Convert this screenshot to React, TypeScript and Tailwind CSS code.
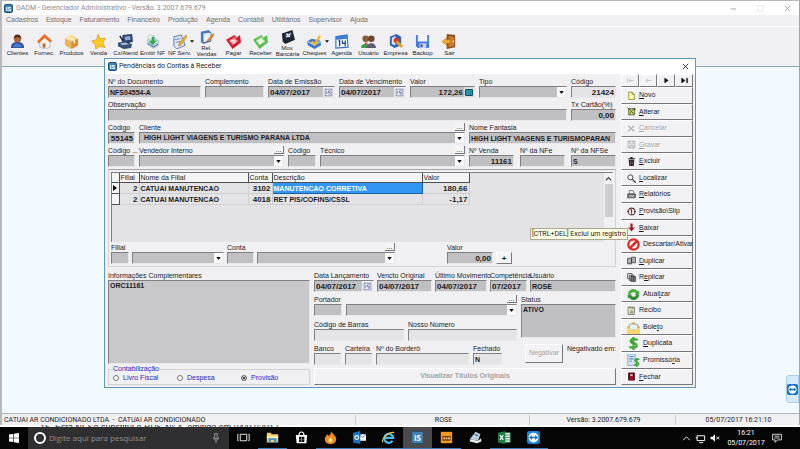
import { useId } from "react";
import type { ReactNode } from "react";

const SUNK = "border border-t-[#808084] border-l-[#808084] border-r-[#e8e8ea] border-b-[#e8e8ea]";
const RAISED = "border border-t-white border-l-white border-r-[#77777b] border-b-[#77777b]";

function Svg({ children, className = "size-4" }: { children: ReactNode; className?: string }) {
  return (
    <svg viewBox="0 0 16 16" className={`${className} shrink-0`} aria-hidden="true">
      {children}
    </svg>
  );
}

function AppLogo({ className }: { className: string }) {
  return (
    <span className={`${className} flex shrink-0 items-center justify-center rounded-[2px] border border-[#1d4f74] bg-[#3d83b3] font-bold text-white`}>
      IS
    </span>
  );
}

/* ---------- form pieces ---------- */

const isNumeric = (text: string) => /^[\d.,/-]+$/.test(text);

type FieldProps = {
  label: string;
  value?: string;
  className?: string;
  tone?: string;
  align?: string;
  adorn?: ReactNode;
};

function Field({ label, value = "", className = "", tone = "bg-[#c0c0c2]", align = "", adorn }: FieldProps) {
  const id = useId();
  return (
    <div className={`flex min-w-0 flex-col ${className}`}>
      <label htmlFor={id} className="h-[9px] leading-[9px] whitespace-nowrap">{label}</label>
      <div className={`flex h-3 items-center ${SUNK} ${tone}`}>
        <input
          id={id}
          defaultValue={value}
          className={`h-full w-full min-w-0 bg-transparent px-px font-bold outline-none ${align} ${isNumeric(value) ? "text-[8px]" : ""}`}
        />
        {adorn}
      </div>
    </div>
  );
}

type ComboProps = { label: string; value?: string; className?: string; hideLabel?: boolean; more?: boolean };

function Combo({ label, value = "", className = "", hideLabel, more }: ComboProps) {
  const id = useId();
  return (
    <div className={`flex min-w-0 flex-col ${className}`}>
      <div className="flex h-[9px] items-start leading-[9px] whitespace-nowrap">
        {!hideLabel && <label htmlFor={id}>{label}</label>}
        <div className="flex-1" />
        {more && <MoreButton />}
      </div>
      <div className={`relative h-3 ${SUNK} bg-[#c0c0c2]`}>
        <select
          id={id}
          aria-label={hideLabel ? label : undefined}
          className="block h-full w-full appearance-none bg-transparent px-1 font-bold leading-[10px] outline-none"
        >
          <option>{value}</option>
        </select>
        <span className="pointer-events-none absolute inset-y-0 right-0 flex w-[9px] items-center justify-center bg-[#fafafa]">
          <svg viewBox="0 0 6 4" className="h-[3px] w-[5px]"><path d="M0 0h6L3 4z" fill="#111" /></svg>
        </span>
      </div>
    </div>
  );
}

function MoreButton() {
  return (
    <button type="button" aria-label="Mais opções" className="flex h-2 w-[10px] items-end justify-center border-r border-b border-[#77777b] bg-[#f4f4f6] leading-[6px]">
      ...
    </button>
  );
}

function CalendarButton() {
  return (
    <button type="button" aria-label="Abrir calendário" className="flex h-full w-[11px] shrink-0 items-center justify-center bg-[#f0f0f4]">
      <Svg className="size-[9px]">
        <rect x="2" y="2" width="12" height="12" fill="#fff" stroke="#6a6ea8" strokeWidth="1.400" />
        <path d="M5 5v6M12 5H8v3h3v3H8" fill="none" stroke="#4a4e8c" strokeWidth="1.300" />
      </Svg>
    </button>
  );
}

function CalcButton() {
  return (
    <button type="button" aria-label="Calculadora" className="flex h-full w-[10px] shrink-0 items-center justify-center bg-[#d8dcde]">
      <span className="h-[7px] w-2 rounded-[1px] border border-[#0b4f5e] bg-[#2a8fa0]" />
    </button>
  );
}

/* ---------- main toolbar ---------- */

const check = <path d="M5 8l3 3 6-9" fill="none" stroke="#f2b824" strokeWidth="2.600" />;

const tools: { name: string; icon: ReactNode; arrow?: boolean; twoLines?: boolean }[] = [
  { name: "Clientes", icon: <><path d="M1 15c0-5 3-6.500 7-6.500s7 1.500 7 6.500z" fill="#284f9c" /><path d="M3 14c1-3 2-4 5-4s4 1 5 4z" fill="#4a79cc" /><circle cx="8" cy="5" r="4" fill="#a8683a" /><path d="M4 5c0-6 8-6 8 0-2-2-6-2-8 0z" fill="#4b2814" /></> },
  { name: "Fornec.", icon: <><path d="M3 8v6l6 2 5-2V8L9 3z" fill="#f4f2f0" stroke="#9a9a9a" strokeWidth=".6" /><path d="M0 8l8-8 8 7-2 2-6-5-6 6z" fill="#ee6a1f" /><path d="M6 10h3v5l-3-1z" fill="#b06a3a" /></> },
  { name: "Produtos", icon: <><path d="M1 5l7-4 7 4v7l-7 4-7-4z" fill="#e9b255" /><path d="M1 5l7-4 7 4-7 3z" fill="#f8dc98" /><path d="M8 8v8l7-4V5z" fill="#d0903a" /><path d="M4 3l7 4v3" stroke="#fff1c4" strokeWidth="1.600" fill="none" /></> },
  { name: "Venda", icon: <path d="M7.500.5l2.500 4.500 5.500-.5-3 5 2.500 5-5.500-1.500L5 16.500 4.500 11 .5 7.500 6 6z" fill="#fccb1e" stroke="#d9981a" strokeWidth=".8" /> },
  { name: "Cx/Atend", icon: <><path d="M5 1l10-1 1 8-5 2-7-2z" fill="#2c3f66" /><path d="M7 3l6-1 .5 4-6 1z" fill="#89a9dd" /><path d="M0 9l8-1 7 3-1 4-8 1-6-3z" fill="#3c5075" /><path d="M2 10l6-1 4 2-7 1z" fill="#a9b9d2" /><path d="M2 2l3 5" stroke="#222" strokeWidth="1.500" /></> },
  { name: "Emitir NF", icon: <><path d="M2 6l6-4 7 5v5l-6 4-7-5z" fill="#b4c8dc" /><path d="M3 7l5-3 6 4-5 3z" fill="#f6f9fc" /><path d="M4 1l6 1-1 5-6-2z" fill="#fff" stroke="#8ba" strokeWidth=".6" /><path d="M7 3h3v4h3l-5 5-4-5h3z" fill="#33a957" /><path d="M3 10l6 4 5-3" stroke="#496f95" fill="none" /></> },
  { name: "NF Serv.", arrow: true, icon: <><path d="M2 3l8-2 4 11-9 4-3-3z" fill="#dfe8f6" stroke="#4c6da2" strokeWidth=".9" /><path d="M3 6l6-1M4 9l5-1" stroke="#6d8cbe" /><path d="M15 1l-7 8-1 4 3-2 6-8z" fill="#f6b62a" stroke="#9d6916" strokeWidth=".6" /></> },
  { name: "Rel. Vendas", twoLines: true, icon: <><path d="M1 2l9-2 3 3v10l-9 3-3-2z" fill="#4779bd" /><path d="M4 4l8-1v9l-8 2z" fill="#e9f2fc" /><path d="M15 4l-6 7-2 3 4-2 5-6z" fill="#ed8f3b" stroke="#98531e" strokeWidth=".6" /></> },
  { name: "Pagar", icon: <><path d="M0 6l9-5 2 3 4-3 1 8-9 7z" fill="#d41d2e" /><path d="M3 7l6-4 4 5-6 4z" fill="#ef6b74" /><path d="M5 8l4-2M7 10l4-3" stroke="#fff" strokeWidth="1.500" /></> },
  { name: "Receber", icon: <><path d="M0 6l9-5 2 3 4-3 1 8-9 7z" fill="#5cbd55" /><path d="M3 7l6-4 4 5-6 4z" fill="#b4e6a2" /><path d="M5 8l4-2M7 10l4-3" stroke="#fff" strokeWidth="1.500" /></> },
  { name: "Mov. Bancária", twoLines: true, icon: <><path d="M1 4l12-4 3 11-11 5-3-3z" fill="#1c2433" /><path d="M4 5l8-3 1 5-8 3z" fill="#33425a" /><path d="M6 4l4 4M11 4l-5 4" stroke="#fff" strokeWidth="1.300" /></> },
  { name: "Cheques", arrow: true, icon: <><path d="M0 8l5-3 9 2 1 5-7 4-7-4z" fill="#3c77cd" /><path d="M1 8l7 4 6-4" stroke="#b9d5f7" strokeWidth="1.300" fill="none" />{check}</> },
  { name: "Agenda", icon: <><path d="M2 3l12-2 1 13-13 1z" fill="#f4f8fe" stroke="#3b6fc4" strokeWidth="1.200" /><path d="M2 2l12-1v4L2 6z" fill="#3f7ad6" /><path d="M5 8l1-1v6M9 7v3h3M12 7v6" fill="none" stroke="#1c3f86" strokeWidth="1.300" /></> },
  { name: "Usuário", icon: <><circle cx="5" cy="5" r="3.500" fill="#8c5a31" /><path d="M0 15c0-6 10-6 10 0z" fill="#3f9a48" /><circle cx="11" cy="5" r="3.500" fill="#6d4630" /><path d="M6 15c0-7 10-7 10 0z" fill="#605a74" /><path d="M4 9l1 4 2-4z" fill="#d9412e" /></> },
  { name: "Empresa", icon: <><path d="M2 3l7-3 5 3v9l-7 3-5-3z" fill="#2c62bd" /><path d="M4 4l4-2v10l-4-1z" fill="#dce8fa" /><circle cx="9" cy="7" r="3" fill="#d53a2c" /><path d="M9 8l6 6" stroke="#e7a321" strokeWidth="3" /></> },
  { name: "Backup", icon: <><path d="M1 1h14v14H3l-2-2z" fill="#4a7bdc" /><path d="M3 1h10v7H3z" fill="#f1f6fd" /><path d="M5 10h7v5H5z" fill="#c6d6ef" /><path d="M6 11h2v3H6z" fill="#264a97" /></> },
  { name: "Sair", icon: <><path d="M5 0l9 1v13l-9 2z" fill="#8d4c1b" /><path d="M7 2l6 1v10l-6 1z" fill="#ca7a34" /><circle cx="12" cy="8" r="1" fill="#fff3a0" /><path d="M0 8l5-4v2h4v4H5v2z" fill="#f0a727" stroke="#a76a12" strokeWidth=".5" /></> },
];

/* ---------- dialog actions ---------- */

const dollar = <path d="M13 4c-2-2.500-9-2-8.500 1.200C5 8.500 12 7 12 10.500c0 3.500-7 3.500-9 1M8 0v16" fill="none" stroke="#3fa535" strokeWidth="2.600" />;

const actions: { name: string; u: number; icon: ReactNode; disabled?: boolean; big?: boolean }[] = [
  { name: "Novo", u: 0, icon: <path d="M3 2h6l4 4v9H3zM9 2v4h4" fill="#fdfdc9" stroke="#8b9416" strokeWidth="1.500" /> },
  { name: "Alterar", u: 0, icon: <><path d="M3 3h10v11H3z" fill="#d9e26a" stroke="#3b4412" strokeWidth="1.300" /><path d="M1 1l12 12M5 12l6-8" stroke="#30601e" strokeWidth="1.600" /><path d="M12 2l3 3" stroke="#2b2b2b" strokeWidth="2" /></> },
  { name: "Cancelar", u: 0, disabled: true, icon: <path d="M2 3l11 10M13 3L2 13" stroke="#a6a6aa" strokeWidth="1.800" /> },
  { name: "Gravar", u: 0, disabled: true, icon: <path d="M2 2h12v12H2zM5 2v5h6V2M5 14v-4h6v4" fill="none" stroke="#a6a6aa" strokeWidth="1.400" /> },
  { name: "Excluir", u: 0, icon: <><path d="M3 5h10l-1 11H4z" fill="#2d2528" /><path d="M2 3h12M6 1h4" stroke="#2d2528" strokeWidth="2" /><path d="M6.500 7v7M9.500 7v7" stroke="#8d8588" /></> },
  { name: "Localizar", u: 0, icon: <><circle cx="6" cy="6" r="4.500" fill="#f3fbfd" stroke="#38383c" strokeWidth="1.600" /><path d="M9.500 9.500l6 6" stroke="#38383c" strokeWidth="2.200" /></> },
  { name: "Relatórios", u: 0, icon: <><path d="M4 1h7l2 6H4z" fill="#f6f6f6" stroke="#333" /><path d="M1 7h14v7H1z" fill="#77777b" stroke="#27272a" /><path d="M3 10h10M3 12h10" stroke="#dedee0" /></> },
  { name: "Provisão\\Slip", u: 0, icon: <><circle cx="8" cy="8" r="6" fill="#f6eaea" stroke="#5b3238" strokeWidth="1.800" /><path d="M8 4v8M6 6l2-2" stroke="#b12836" strokeWidth="1.800" fill="none" /><path d="M0 8h4M12 8h4" stroke="#5b3238" strokeWidth="1.500" /></> },
  { name: "Baixar", u: 0, icon: <path d="M6 1h4v7h4l-6 7-6-7h4z" fill="#a3202a" /> },
  { name: "Descartar/Ativar", u: -1, big: true, icon: <><circle cx="8" cy="8" r="6.300" fill="#fbeceb" stroke="#dc2a27" strokeWidth="2.800" /><path d="M3.500 12.500l9-9" stroke="#dc2a27" strokeWidth="2.800" /></> },
  { name: "Duplicar", u: 0, icon: <><path d="M1 4h7v10H1zM8 2h7v10H8z" fill="#9b9b9f" stroke="#3a3a3e" strokeWidth="1.200" /><path d="M3 7h3M3 10h3M10 5h3M10 8h3" stroke="#fff" /></> },
  { name: "Replicar", u: 1, icon: <><path d="M1 1h8v9H1z" fill="#f4f4f4" stroke="#2c2c30" strokeWidth="1.200" /><path d="M4 4h8v9H4z" fill="#bdbdc1" stroke="#2c2c30" strokeWidth="1.200" /><path d="M7 6h8v9H7z" fill="#6a6a70" stroke="#2c2c30" strokeWidth="1.200" /></> },
  { name: "Atualizar", u: 5, big: true, icon: <><path d="M1 7c1-6 9-8 12-3l2-1v6H9l2-2C9 4 5 5 4 8z" fill="#4bb044" /><path d="M15 9c-1 6-9 8-12 3l-2 1V8h6L5 9c2 3 6 2 7-1z" fill="#2f8f35" /></> },
  { name: "Recibo", u: -1, icon: <><path d="M2 2h11v13H2z" fill="#eef0d4" stroke="#4b4d3a" strokeWidth="1.200" /><path d="M4 1l4 5M9 4h3M5 9h6M5 12h6" stroke="#4f5a2c" strokeWidth="1.300" /></> },
  { name: "Boleto", u: 4, big: true, icon: <><path d="M0 7l8-6 8 6v8H0z" fill="#e8b637" /><path d="M3 4h10v7H3z" fill="#e6f0fb" stroke="#7fa2cb" strokeWidth=".7" /><path d="M0 8l8 4 8-4v8H0z" fill="#fbd86b" /></> },
  { name: "Duplicata", u: 0, big: true, icon: dollar },
  { name: "Promissória", u: 8, big: true, icon: <><path d="M1 0h9v14H1z" fill="#dbe8fa" stroke="#6d95cf" /><path d="M3 3h5M3 6h5M3 9h3" stroke="#5585cc" strokeWidth="1.300" /><path d="M15 7c-2-2-6-1-5 1.500 1 1.500 5 1 4.500 3.500S10 14 9 13M12 5v11" fill="none" stroke="#3fa535" strokeWidth="1.800" /></> },
  { name: "Fechar", u: 0, icon: <><path d="M2 1h12v14H2z" fill="#4c0d14" /><path d="M5 3h6v12H5z" fill="#a01724" /><path d="M6 4h4v3H6z" fill="#e9c9c9" /></> },
];

function ActionLabel({ name, u }: { name: string; u: number }) {
  if (u < 0) return <span>{name}</span>;
  return (
    <span>
      {name.slice(0, u)}
      <span className="underline">{name.slice(u, u + 1)}</span>
      {name.slice(u + 1)}
    </span>
  );
}

function ActionColumn() {
  return (
    <div className="flex w-[72px] shrink-0 flex-col">
      <div className="flex h-[13px] shrink-0">
        {[
          { n: "Primeiro", d: "M3 4v8M13 8H6M9 5L5 8l4 3", off: true },
          { n: "Anterior", d: "M13 8H4M7 5L3 8l4 3", off: true },
          { n: "Próximo", d: "M5 4v8l6-4z", off: false },
          { n: "Último", d: "M3 4v8l6-4zM12 4v8h1V4z", off: false },
        ].map((b) => (
          <button key={b.n} type="button" aria-label={b.n} disabled={b.off} className={`flex flex-1 items-center justify-center bg-[#f2f1f3] ${RAISED}`}>
            <Svg className="size-[9px]">
              <path d={b.d} fill={b.off ? "none" : "#111"} stroke={b.off ? "#b4b4b8" : "#111"} strokeWidth="1.200" />
            </Svg>
          </button>
        ))}
      </div>
      {actions.map((a) => (
        <button
          key={a.name}
          type="button"
          disabled={a.disabled}
          className={`flex min-h-4 flex-1 items-center gap-[3px] bg-[#f2f1f3] pl-[5px] whitespace-nowrap ${RAISED} ${a.disabled ? "text-[#a3a3a7] [text-shadow:1px_1px_0_#fff]" : ""}`}
        >
          <Svg className={a.big ? "size-[13px]" : "size-[9px]"}>{a.icon}</Svg>
          <ActionLabel name={a.name} u={a.u} />
        </button>
      ))}
    </div>
  );
}

/* ---------- entries table ---------- */

const entries = [
  { filial: "2", nome: "CATUAI MANUTENCAO", conta: "3102", desc: "MANUTENCAO CORRETIVA", valor: "180,66", current: true },
  { filial: "2", nome: "CATUAI MANUTENCAO", conta: "4018", desc: "RET PIS/COFINS/CSSL", valor: "-1,17", current: false },
];

function EntriesPanel() {
  const head = "border-r border-b border-[#505054] px-px text-left font-normal";
  const cell = "border-r border-b border-[#cfcfd2] px-px";
  return (
    <section className="border border-[#d2d2d5] border-t-[#a5a5a9] p-0.5">
      <div className="flex h-[70px] justify-between border-t border-l border-[#808084] bg-[#e3e3e5]">
        <table className="h-8 w-[357px] table-fixed border-collapse leading-[9px] whitespace-nowrap">
          <thead className="bg-[#f4f4f5]">
            <tr>
              <th className={`${head} w-[7px]`} aria-label="Registro atual" />
              <th className={`${head} w-5`}>Filial</th>
              <th className={`${head} w-[109px]`}>Nome da Filial</th>
              <th className={`${head} w-6`}>Conta</th>
              <th className={`${head} w-[150px]`}>Descrição</th>
              <th className={`${head} w-[47px]`}>Valor</th>
            </tr>
          </thead>
          <tbody className="font-bold">
            {entries.map((e) => (
              <tr key={e.conta}>
                <td className="border-r border-b border-[#505054] bg-[#f4f4f5]">
                  {e.current && <svg viewBox="0 0 4 6" className="ml-px h-[6px] w-1"><path d="M0 0v6l4-3z" fill="#000" /></svg>}
                </td>
                <td className={`${cell} text-right text-[8px]`}>{e.filial}</td>
                <td className={cell}>{e.nome}</td>
                <td className={`${cell} text-right text-[8px]`}>{e.conta}</td>
                <td className={e.current ? "border border-[#1c5ea0] bg-[#3296f4] px-px text-white" : cell}>{e.desc}</td>
                <td className={`${cell} text-right text-[8px]`}>{e.valor}</td>
              </tr>
            ))}
          </tbody>
        </table>
        <div className="flex w-[9px] flex-col items-center bg-[#f1f1f3]">
          <svg viewBox="0 0 8 8" className="my-0.5 size-[7px]"><path d="M1 6l3-3 3 3" fill="none" stroke="#444" strokeWidth="1.300" /></svg>
          <div className="h-[33px] w-2 bg-[#cdcdd0]" />
        </div>
      </div>
      <div className="mt-px flex items-end gap-[3px]">
        <Field label="Filial" className="w-[18px]" />
        <Combo label="Nome da filial" hideLabel className="w-[92px]" />
        <Field label="Conta" className="w-[27px]" />
        <Combo label="Descrição da conta" hideLabel more className="w-[138px]" />
        <div className="flex-1" />
        <Field label="Valor" value="0,00" align="text-right" className="w-[46px]" />
        <button type="button" aria-label="Adicionar" className={`h-3 w-4 bg-[#f4f4f6] text-[8px] font-bold leading-[9px] ${RAISED}`}>+</button>
        <div className="w-[98px]" />
      </div>
    </section>
  );
}

/* ---------- dialog ---------- */

function ReceivablesDialog() {
  const notesId = useId();
  const statusId = useId();
  const light = "bg-[#e4e4e6]";
  return (
    <section role="dialog" aria-label="Pendências do Contas à Receber" className="absolute inset-x-[104px] top-[58px] border border-[#5f97bd] bg-[#f0eff2] text-[7px] text-[#1b1b1f]">
      <header className="flex h-[15px] items-center gap-0.5 bg-white pr-[6px] pl-[3px] font-['Roboto',sans-serif]">
        <AppLogo className="size-[9px] text-[6px]" />
        <h1 className="flex-1">Pendências do Contas à Receber</h1>
        <button type="button" aria-label="Fechar janela">
          <svg viewBox="0 0 8 8" className="size-[7px]"><path d="M1 1l6 6M7 1L1 7" stroke="#222" /></svg>
        </button>
      </header>
      <div className="flex gap-[5px] pr-0.5 pb-0.5 pl-[3px]">
        <form className="flex min-w-0 flex-1 flex-col gap-0.5 pt-[3px]">
          <div className="flex gap-1">
            <Field label="Nº do Documento" value="NFS04554-A" className="w-[93px]" />
            <Field label="Complemento" className="w-[59px]" />
            <Field label="Data de Emissão" value="04/07/2017" className="w-[67px]" adorn={<CalendarButton />} />
            <Field label="Data de Vencimento" value="04/07/2017" className="w-[67px]" adorn={<CalendarButton />} />
            <Field label="Valor" value="172,26" align="text-right" className="w-[65px]" adorn={<CalcButton />} />
            <Combo label="Tipo" className="flex-1" />
            <Field label="Código" value="21424" align="text-right" tone={light} className="w-[45px]" />
          </div>
          <div className="flex gap-1">
            <Field label="Observação" className="flex-1" />
            <Field label="Tx Cartão(%)" value="0,00" align="text-right" className="w-[45px]" />
          </div>
          <div className="flex gap-1">
            <Field label="Código" value="55145" align="text-right" className="w-[27px]" />
            <Combo label="Cliente" value="HIGH LIGHT VIAGENS E TURISMO PARANA LTDA" more className="flex-1" />
            <Field label="Nome Fantasia" value="HIGH LIGHT VIAGENS E TURISMOPARAN" className="w-[147px]" />
          </div>
          <div className="flex gap-1">
            <Field label="Código ..." className="w-[27px]" />
            <Combo label="Vendedor Interno" more className="flex-1" />
            <Field label="Código" className="w-[28px]" />
            <Combo label="Técnico" more className="flex-1" />
            <div className="flex w-[147px] justify-between">
              <Field label="Nº Venda" value="11161" align="text-right" className="w-[45px]" />
              <Field label="Nº da NFe" className="w-[45px]" />
              <Field label="Nº da NFSe" value="S" className="w-[45px]" />
            </div>
          </div>

          <EntriesPanel />

          <div className="mt-0.5 flex gap-1">
            <div className="flex w-[202px] flex-col">
              <label htmlFor={notesId} className="h-[9px] leading-[9px]">Informações Complementares</label>
              <textarea id={notesId} defaultValue="ORC11161" className={`h-[84px] w-full resize-none bg-[#c8c7ca] px-px font-bold leading-[10px] outline-none ${SUNK}`} />
              <fieldset className="mt-px flex h-5 gap-6 border border-[#d2d2d5] px-1 text-[#2828c8]">
                <legend className="h-2 leading-2">Contabilização</legend>
                {["Livro Fiscal", "Despesa", "Provisão"].map((o) => (
                  <label key={o} className="flex h-[10px] w-10 items-center gap-1 leading-[10px] whitespace-nowrap">
                    <input type="radio" name="contabilizacao" defaultChecked={o === "Provisão"} className="size-[6px] shrink-0 appearance-none rounded-full border border-[#77777b] bg-white checked:bg-black checked:shadow-[inset_0_0_0_1px_#fff]" />
                    {o}
                  </label>
                ))}
              </fieldset>
            </div>

            <div className="flex min-w-0 flex-1 flex-col gap-[3px]">
              <div className="flex gap-[3px]">
                <Field label="Data Lançamento" value="04/07/2017" className="w-[60px]" adorn={<CalendarButton />} />
                <Field label="Vencto Original" value="04/07/2017" className="w-[55px]" />
                <Field label="Último Movimento" value="04/07/2017" className="w-[52px]" />
                <Field label="Competência" value="07/2017" className="w-[37px]" />
                <Field label="Usuário" value="ROSE" className="flex-1" />
              </div>
              <div className="flex gap-1">
                <div className="flex min-w-0 flex-1 flex-col gap-1">
                  <div className="flex gap-1">
                    <Field label="Portador" className="w-[28px]" />
                    <Combo label="Nome do portador" hideLabel more className="flex-1" />
                  </div>
                  <div className="flex gap-1">
                    <Field label="Código de Barras" tone={light} className="w-[90px]" />
                    <Field label="Nosso Número" tone={light} className="flex-1" />
                  </div>
                </div>
                <div className="flex w-[95px] flex-col">
                  <label htmlFor={statusId} className="h-[9px] leading-[9px]">Status</label>
                  <textarea id={statusId} defaultValue="ATIVO" className={`h-[34px] w-full resize-none bg-[#c0c0c2] px-px font-bold leading-[9px] outline-none ${SUNK}`} />
                </div>
              </div>
              <div className="flex gap-1">
                <Field label="Banco" tone={light} className="w-[27px]" />
                <Field label="Carteira" tone={light} className="w-[27px]" />
                <Field label="Nº do Borderô" tone={light} className="flex-1" />
                <Field label="Fechado" value="N" tone={light} className="w-[29px]" />
                <div className="flex w-[110px] items-start justify-end gap-1">
                  <button type="button" disabled className={`h-[19px] w-[38px] bg-[#f2f1f3] text-[#a3a3a7] ${RAISED}`}>Negativar</button>
                  <span className="leading-[9px] whitespace-nowrap">Negativado em:</span>
                </div>
              </div>
              <button type="button" disabled className={`h-[17px] w-full bg-[#f2f1f3] font-bold text-[#a3a3a7] ${RAISED}`}>
                Visualizar Títulos Originais
              </button>
            </div>
          </div>
        </form>
        <ActionColumn />
      </div>
      <div role="tooltip" className="absolute top-[169px] right-[67px] border border-[#a9a98f] bg-[#ffffe6] px-px font-['Roboto',sans-serif] leading-[10px] whitespace-nowrap">
        [CTRL+DEL] Exclui um registro
      </div>
    </section>
  );
}

/* ---------- taskbar ---------- */

const apps: { name: string; icon: ReactNode; open?: boolean; active?: boolean }[] = [
  { name: "Visão de tarefas", icon: <path d="M4 4h8v8H4zM2 4H1v8h1M14 4h1v8h-1" fill="none" stroke="#e8e8e8" strokeWidth="1.200" /> },
  { name: "Explorador", open: true, icon: <><path d="M1 2h5l1 2h8v10H1z" fill="#f6cf63" /><path d="M1 6h14v3H1z" fill="#fdeab0" /><path d="M3 9h10v5h-3v-3H6v3H3z" fill="#3f95d3" /></> },
  { name: "Loja", icon: <><path d="M1 5h14l-1 10H2z" fill="#fff" /><path d="M5 5c0-5 6-5 6 0" fill="none" stroke="#fff" strokeWidth="1.400" /><path d="M5 7h3v3H5zM8.500 7h3v3h-3zM5 10.500h3v3H5zM8.500 10.500h3v3h-3z" fill="#111" /></> },
  { name: "Chama", open: true, icon: <><path d="M9 0c1 4 6 5 6 10 0 8-14 8-14 0 0-3 2-4 3-6l2 2c2-2 3-3 3-6z" fill="#f18a1d" /><path d="M8 8c3 2 3 6 0 6s-4-3 0-6z" fill="#ffe08a" /></> },
  { name: "Outlook", open: true, icon: <><path d="M8 4h8v8H8z" fill="#fff" /><path d="M8 4l4 4 4-4" stroke="#1471c4" fill="none" /><path d="M0 2l9-2v16l-9-2z" fill="#1471c4" /><circle cx="4.500" cy="8" r="2.300" fill="none" stroke="#fff" strokeWidth="1.400" /></> },
  { name: "Internet Explorer", open: true, icon: <><path d="M13 12a5.500 5.500 0 1 1 .8-3.500H4" fill="none" stroke="#48bdf0" strokeWidth="2.800" /><path d="M1 14C-1 9 9 0 15 2" fill="none" stroke="#f3c73c" strokeWidth="1.400" /></> },
  { name: "GADM", open: true, active: true, icon: null },
  { name: "Editor", open: true, icon: <><path d="M1 1h14v14H1z" fill="#f29a1f" /><path d="M3 6h10v6H3z" fill="#7c3f0d" /><path d="M4 9h2M7 9h2M10 9h2" stroke="#ffd592" strokeWidth="2" /></> },
  { name: "Scanner", icon: <><path d="M1 10L8 1l6 3-3 8z" fill="#bcd0e0" /><path d="M1 10l10 2 4-3v4l-5 2-9-2z" fill="#e9edf0" /><path d="M7 4l4 2" stroke="#4c6b86" strokeWidth="1.500" /></> },
  { name: "Excel", open: true, icon: <><path d="M7 2h8v12H7z" fill="#e7f4ec" stroke="#1f7a46" /><path d="M9 5h5M9 8h5M9 11h5" stroke="#1f7a46" /><path d="M0 2l9-2v16l-9-2z" fill="#1f7a46" /><path d="M2.500 5l4 6M6.500 5l-4 6" stroke="#fff" strokeWidth="1.400" /></> },
  { name: "TeamViewer", open: true, icon: <><rect width="16" height="16" rx="3" fill="#1b86d8" /><circle cx="8" cy="8" r="6" fill="#fff" /><path d="M2.500 8L6 5v2h4V5l3.500 3L10 11V9H6v2z" fill="#1b6fc0" /></> },
];

function Taskbar() {
  return (
    <footer className="flex h-[22px] items-stretch bg-[#050506] font-['Open_Sans',sans-serif] text-white">
      <button type="button" aria-label="Iniciar" className="flex w-7 items-center justify-center">
        <Svg className="size-[10px]"><path d="M0 2.500L7 1.500v6H0zM8 1.300L16 0v7.500H8zM0 8.500h7v6l-7-1zM8 8.500h8V16l-8-1.300z" fill="#fff" /></Svg>
      </button>
      <div className="flex w-[201px] items-center gap-[3px] bg-[#2f2f31] pr-2 pl-[6px]">
        <span className="size-3 shrink-0 rounded-full border-2 border-white" />
        <input aria-label="Pesquisar" placeholder="Digite aqui para pesquisar" className="min-w-0 flex-1 bg-transparent text-[8px] outline-none placeholder:text-[#8f8f93]" />
        <Svg className="size-[10px]"><path d="M6 1h4v8H6zM4 7c0 6 8 6 8 0M8 12v4" fill="none" stroke="#a9a9ad" strokeWidth="1.300" /></Svg>
      </div>
      <nav className="flex" aria-label="Aplicativos">
        {apps.map((a) => (
          <button key={a.name} type="button" aria-label={a.name} className={`flex w-[29px] items-center justify-center border-b ${a.open ? "border-[#3f7db8]" : "border-transparent"} ${a.active ? "bg-[#4a4a4d]" : ""}`}>
            {a.icon ? <Svg className="size-[13px]">{a.icon}</Svg> : <AppLogo className="size-[13px] text-[8px]" />}
          </button>
        ))}
      </nav>
      <div className="ml-auto flex items-center gap-1 pr-[18px]">
        <Svg className="size-[9px]"><path d="M2 11l6-6 6 6" fill="none" stroke="#fff" strokeWidth="1.600" /></Svg>
        <Svg className="size-[11px]"><path d="M3 4h11v7H3zM1 7h3M6 14h6" fill="none" stroke="#fff" strokeWidth="1.400" /></Svg>
        <Svg className="size-[10px]"><path d="M1 6h3l4-4v12l-4-4H1z" fill="#fff" /><path d="M10 6l5 4M15 6l-5 4" stroke="#fff" strokeWidth="1.300" /></Svg>
        <div className="flex w-11 flex-col items-center font-['Roboto',sans-serif] text-[7px] leading-[10px] whitespace-nowrap">
          <span>16:21</span>
          <span>05/07/2017</span>
        </div>
        <Svg className="size-[10px]"><path d="M1 2h14v9H9l-4 4v-4H1zM4 5h8M4 8h8" fill="none" stroke="#fff" strokeWidth="1.300" /></Svg>
      </div>
    </footer>
  );
}

/* ---------- main window ---------- */

export default function App() {
  return (
    <div className="relative flex min-h-screen flex-col bg-[#f2faff] font-['Liberation_Sans',sans-serif] text-[7px] text-[#1b1b1f]">
      <div className="flex flex-1 flex-col border-t border-r border-l-2 border-[#b9b9bd] border-r-[#a4a4a8]">
        <header className="flex h-[14px] items-center gap-[3px] bg-white px-0.5 font-['Roboto',sans-serif] text-[#8c8c90]">
          <AppLogo className="size-[9px] text-[6px]" />
          <span className="flex-1">GADM - Gerenciador Administrativo - Versão: 3.2007.679.679</span>
          <div className="flex gap-5 pr-[6px]">
            {["M1 4.500h6", "M1 1h6v6H1z", "M1 1l6 6M7 1L1 7"].map((d, i) => (
              <button key={d} type="button" aria-label={["Minimizar", "Maximizar", "Fechar"][i]}>
                <svg viewBox="0 0 8 8" className="size-[7px]"><path d={d} fill="none" stroke={i === 1 ? "#e6e6e8" : "#9a9a9e"} /></svg>
              </button>
            ))}
          </div>
        </header>
        <nav className="flex h-3 items-center gap-2 border-b border-white bg-[#f0eff2] pl-1 text-[#707074]">
          {["Cadastros", "Estoque", "Faturamento", "Financeiro", "Produção", "Agenda", "Contábil", "Utilitários", "Supervisor", "Ajuda"].map((m) => (
            <button key={m} type="button">{m}</button>
          ))}
        </nav>
        <div className="flex h-10 items-start border-b border-[#8fa9bb] bg-[#f0eff2] pt-[3px] pl-0.5">
          {tools.map((t) => (
            <button key={t.name} type="button" className="relative flex w-[27px] flex-col items-center gap-px text-[6px] leading-[7px]">
              <Svg className={t.twoLines ? "size-[14px]" : "mt-1 size-[15px]"}>{t.icon}</Svg>
              {t.arrow && <svg viewBox="0 0 6 4" className="absolute top-2.5 -right-px h-[3px] w-1"><path d="M0 0h6L3 4z" fill="#111" /></svg>}
              <span className={t.twoLines ? "text-center leading-[6px]" : "whitespace-nowrap"}>{t.name}</span>
            </button>
          ))}
        </div>
        <main className="flex flex-1 flex-col items-end justify-end pb-[10px]">
          <button type="button" aria-label="TeamViewer" className="flex h-7 w-[13px] items-center justify-center rounded-l-[3px] border border-[#a9cdea] bg-[#d5eafa]">
            <Svg className="size-[11px]"><rect width="16" height="16" rx="3" fill="#1b6fc0" /><circle cx="8" cy="8" r="6" fill="#fff" /><path d="M2.500 8L6 5v2h4V5l3.500 3L10 11V9H6v2z" fill="#1b6fc0" /></Svg>
          </button>
        </main>
        <div className="flex h-3 items-center gap-0.5 border-t border-[#b4b4b8] bg-[#f0eff2] font-['Roboto',sans-serif] leading-[10px] whitespace-nowrap">
          <span className="w-[354px] border-r border-[#c8c8cc] pl-0.5">CATUAI AR CONDICIONADO LTDA&nbsp; -&nbsp; CATUAI AR CONDICIONADO</span>
          <span className="w-[172px] border-r border-[#c8c8cc] text-center">ROSE</span>
          <span className="w-[144px] border-r border-[#c8c8cc] text-center">Versão: 3.2007.679.679</span>
          <span className="flex-1 text-center">05/07/2017 16:21:10</span>
        </div>
      </div>
      <div className="h-0.5 overflow-hidden bg-white pl-10 text-[9px] leading-[5px] whitespace-nowrap">
        15. Esta NFSe substitui o RPS Nº 4, emitido em 04/07/2017
      </div>
      <Taskbar />
      <ReceivablesDialog />
    </div>
  );
}
